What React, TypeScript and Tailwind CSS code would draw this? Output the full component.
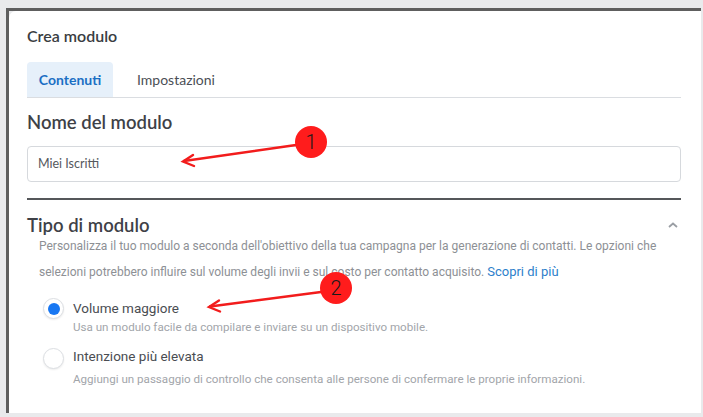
import React from "react";

const body = { fontFamily: "Roboto, 'Noto Sans', sans-serif" };
const head = { fontFamily: "Lato, 'Noto Sans', sans-serif" };

function Radio({ checked }: { checked: boolean }) {
  return (
    <div className="w-[21px] h-[21px] rounded-full bg-white border border-[#dcdfe3] shadow-[0_1px_2px_rgba(0,0,0,0.08)] flex items-center justify-center shrink-0">
      {checked && <div className="w-[12px] h-[12px] rounded-full bg-[#1877f2]" />}
    </div>
  );
}

export default function App() {
  return (
    <div className="relative w-[703px] h-[417px] bg-[#e9eaec] pt-[8px] pl-[6px] pr-[2px] pb-[4px] overflow-hidden">
      <div className="h-full border-l-[3px] border-t-[3px] border-[#5e5e5e] bg-[#e9eaec]">
        <div className="h-full bg-white rounded-tl-[7px] pl-[18px] pr-[20px] pt-[16px]">
          <div className="text-[16px] leading-[17px] font-semibold text-[#3a3d42]" style={head}>
            Crea modulo
          </div>
          <div className="mt-[18px] flex items-stretch border-b border-[#dadde1] h-[36px]">
            <div
              className="w-[86px] bg-[#e6f0fa] rounded-t-[4px] flex items-center justify-center text-[14px] font-bold text-[#1b6fc4]"
              style={head}
            >
              Contenuti
            </div>
            <div className="pl-[24px] flex items-center text-[14px] text-[#4b4f56]" style={head}>
              Impostazioni
            </div>
          </div>
          <div className="mt-[13px] text-[18.5px] leading-[22px] font-semibold text-[#3e4147]" style={head}>
            Nome del modulo
          </div>
          <div className="mt-[13px] h-[36px] border border-[#d6d9dd] rounded-[4px] flex items-center pl-[10px] text-[12.5px] text-[#55585d]" style={head}>
            Miei Iscritti
          </div>
          <div className="mt-[16px] h-[2px] bg-[#55575a]" />
          <div className="mt-[14px] flex items-center justify-between">
            <div className="text-[18.5px] leading-[22px] font-semibold text-[#3e4147]" style={head}>
              Tipo di modulo
            </div>
            <svg width="12" height="8" viewBox="0 0 12 8" className="mr-[2px]">
              <path d="M2 6 L6 2.5 L10 6" fill="none" stroke="#9a9ea4" strokeWidth="1.8" />
            </svg>
          </div>
          <div className="mt-[-2px] pl-[12px] text-[12px] leading-[25px] text-[#8d9095] whitespace-nowrap" style={body}>
            <div>
              Personalizza il tuo modulo a seconda dell'obiettivo della tua campagna per la generazione di contatti. Le opzioni che
            </div>
            <div>
              selezioni potrebbero influire sul volume degli invii e sul costo per contatto acquisito.{" "}
              <span className="text-[13px] text-[#2d7fcb]">Scopri di più</span>
            </div>
          </div>
          <div className="mt-[13px] pl-[16px] flex items-start gap-[9px]">
            <div className="pt-[0px]">
              <Radio checked />
            </div>
            <div style={body}>
              <div className="text-[13.5px] leading-[20px] text-[#4a4d52]">Volume maggiore</div>
              <div className="mt-[1px] text-[11.6px] leading-[16px] text-[#a2a5aa]">
                Usa un modulo facile da compilare e inviare su un dispositivo mobile.
              </div>
            </div>
          </div>
          <div className="mt-[11px] pl-[16px] flex items-start gap-[9px]">
            <div className="pt-[2px]">
              <Radio checked={false} />
            </div>
            <div style={body}>
              <div className="text-[13.5px] leading-[20px] text-[#4a4d52]">Intenzione più elevata</div>
              <div className="mt-[5px] text-[11.6px] leading-[16px] text-[#a2a5aa]">
                Aggiungi un passaggio di controllo che consenta alle persone di confermare le proprie informazioni.
              </div>
            </div>
          </div>
        </div>
      </div>

      {/* annotations */}
      <svg className="absolute inset-0 pointer-events-none" width="703" height="417" viewBox="0 0 703 417">
        <g stroke="#f21c1c" strokeWidth="2.4" fill="none" strokeLinecap="round">
          <path d="M296 145 L184 161" />
          <path d="M193 155 L183 161.5 L194 166" />
          <path d="M321 292 L210 306.5" />
          <path d="M219 300.5 L209 307 L220 311.5" />
        </g>
        <circle cx="311" cy="142" r="16" fill="#ff1c1c" />
        <circle cx="336" cy="288" r="16" fill="#ff1c1c" />
      </svg>
      <div
        className="absolute left-[295px] top-[126px] w-[32px] h-[32px] flex items-center justify-center text-[20px] font-light text-[#1a1a1a]"
        style={body}
      >
        1
      </div>
      <div
        className="absolute left-[320px] top-[272px] w-[32px] h-[32px] flex items-center justify-center text-[20px] font-light text-[#1a1a1a]"
        style={body}
      >
        2
      </div>
    </div>
  );
}
